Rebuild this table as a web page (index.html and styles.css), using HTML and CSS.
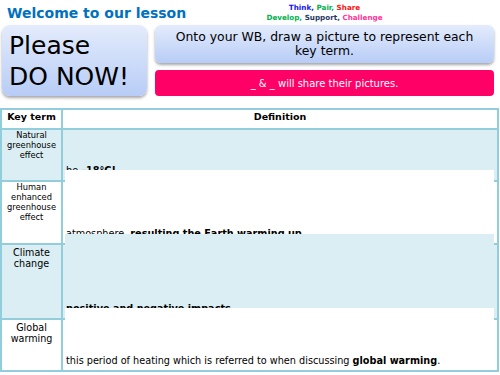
FILE: index.html
```html
<!DOCTYPE html>
<html lang="en">
<head>
<meta charset="utf-8">
<title>Welcome to our lesson</title>
<link rel="stylesheet" href="styles.css">
</head>
<body>
<div class="slide">
  <header class="top">
    <h1 class="title">Welcome to our lesson</h1>
    <div class="tps">
      <div><span class="c-blue">Think,</span> <span class="c-green">Pair,</span> <span class="c-red">Share</span></div>
      <div><span class="c-green">Develop,</span> <span class="c-navy">Support,</span> <span class="c-pink">Challenge</span></div>
    </div>
  </header>
  <section class="starter">
    <div class="donow">Please<br>DO NOW!</div>
    <div class="tasks">
      <div class="task">Onto your WB, draw a picture to represent each key term.</div>
      <div class="share">_ &amp; _ will share their pictures.</div>
    </div>
  </section>
  <div class="tablewrap">
    <table class="defs">
      <tr class="head">
        <th class="kt">Key term</th>
        <th class="def">Definition</th>
      </tr>
      <tr class="r1 tint">
        <td class="kt small">Natural greenhouse effect</td>
        <td class="def">be <b>–18°C!</b></td>
      </tr>
      <tr class="r2">
        <td class="kt small">Human enhanced greenhouse effect</td>
        <td class="def">atmosphere, <b>resulting the Earth warming up.</b></td>
      </tr>
      <tr class="r3 tint">
        <td class="kt big">Climate change</td>
        <td class="def"><b>positive and negative impacts.</b></td>
      </tr>
      <tr class="r4">
        <td class="kt big">Global warming</td>
        <td class="def">this period of heating which is referred to when discussing <b>global warming</b>.</td>
      </tr>
    </table>
    <div class="cover cover-1"></div>
    <div class="cover cover-2"></div>
    <div class="cover cover-3"></div>
  </div>
</div>
</body>
</html>
```
FILE: styles.css
```css
body {
  margin: 0;
  background: #fff;
  font-family: "DejaVu Sans", Verdana, sans-serif;
  color: #000;
}

.slide {
  width: 500px;
  height: 375px;
  overflow: hidden;
}

.top {
  display: grid;
  grid-template-columns: 155px 339px;
  height: 25px;
}

.title {
  margin: 0;
  padding: 4.5px 0 0 7px;
  font-size: 14px;
  line-height: 17px;
  font-weight: bold;
  color: #0070c0;
  white-space: nowrap;
}

.tps {
  padding-top: 3px;
  text-align: center;
  font-size: 7.2px;
  line-height: 10px;
  font-weight: bold;
}

.c-blue { color: #1010ff; }
.c-green { color: #00b050; }
.c-red { color: #ff1010; }
.c-navy { color: #1f3864; }
.c-pink { color: #ff3399; }

.starter {
  display: flex;
  gap: 8px;
  margin-left: 2px;
  height: 71px;
}

.donow {
  width: 145px;
  box-sizing: border-box;
  padding: 5px 0 0 7px;
  border-radius: 8px;
  background: linear-gradient(#e4ecfc, #b7ccf6);
  box-shadow: 0 2px 3px rgba(0, 0, 0, 0.35);
  font-size: 25px;
  line-height: 31px;
}

.tasks {
  width: 339px;
  display: flex;
  flex-direction: column;
  gap: 7px;
}

.task {
  height: 38px;
  box-sizing: border-box;
  padding: 4.5px 10px 0;
  border-radius: 6px;
  background: linear-gradient(#e4ecfc, #b7ccf6);
  box-shadow: 0 2px 3px rgba(0, 0, 0, 0.35);
  text-align: center;
  font-size: 12.4px;
  line-height: 14.5px;
}

.share {
  height: 26px;
  display: flex;
  align-items: center;
  justify-content: center;
  border-radius: 4px;
  background: #ff0066;
  color: #fff;
  font-size: 10px;
}

.tablewrap {
  position: relative;
  margin-top: 12px;
}

.defs {
  width: 499px;
  table-layout: fixed;
  border-collapse: separate;
  border-spacing: 0;
  border-top: 2px solid #92cddc;
  border-left: 2px solid #92cddc;
}

.defs th,
.defs td {
  box-sizing: border-box;
  padding: 0;
  border-right: 2px solid #92cddc;
  border-bottom: 2px solid #92cddc;
}

.defs th {
  height: 20px;
  padding-top: 1px;
  vertical-align: top;
  font-size: 9.5px;
  line-height: 12px;
  font-weight: bold;
  text-align: center;
}

.defs .kt {
  width: 61px;
  text-align: center;
  vertical-align: top;
}

.tint td { background: #daeef3; }

.r1 td { height: 52px; }
.r2 td { height: 63px; }
.r3 td { height: 75px; }
.r4 td { height: 52px; }

.kt.small {
  font-size: 8.3px;
  line-height: 10px;
}

.kt.big {
  padding-top: 1.5px;
  font-size: 9.6px;
  line-height: 11.7px;
}

.defs td.def {
  padding: 0 0 3px 3px;
  vertical-align: bottom;
  font-size: 9.7px;
  line-height: 12px;
  white-space: nowrap;
}

.cover {
  position: absolute;
  left: 65px;
  width: 429px;
}

.cover-1 { top: 62px; height: 58px; background: #fff; }
.cover-2 { top: 126px; height: 68px; background: #daeef3; }
.cover-3 { top: 200px; height: 44px; background: #fff; }
```
